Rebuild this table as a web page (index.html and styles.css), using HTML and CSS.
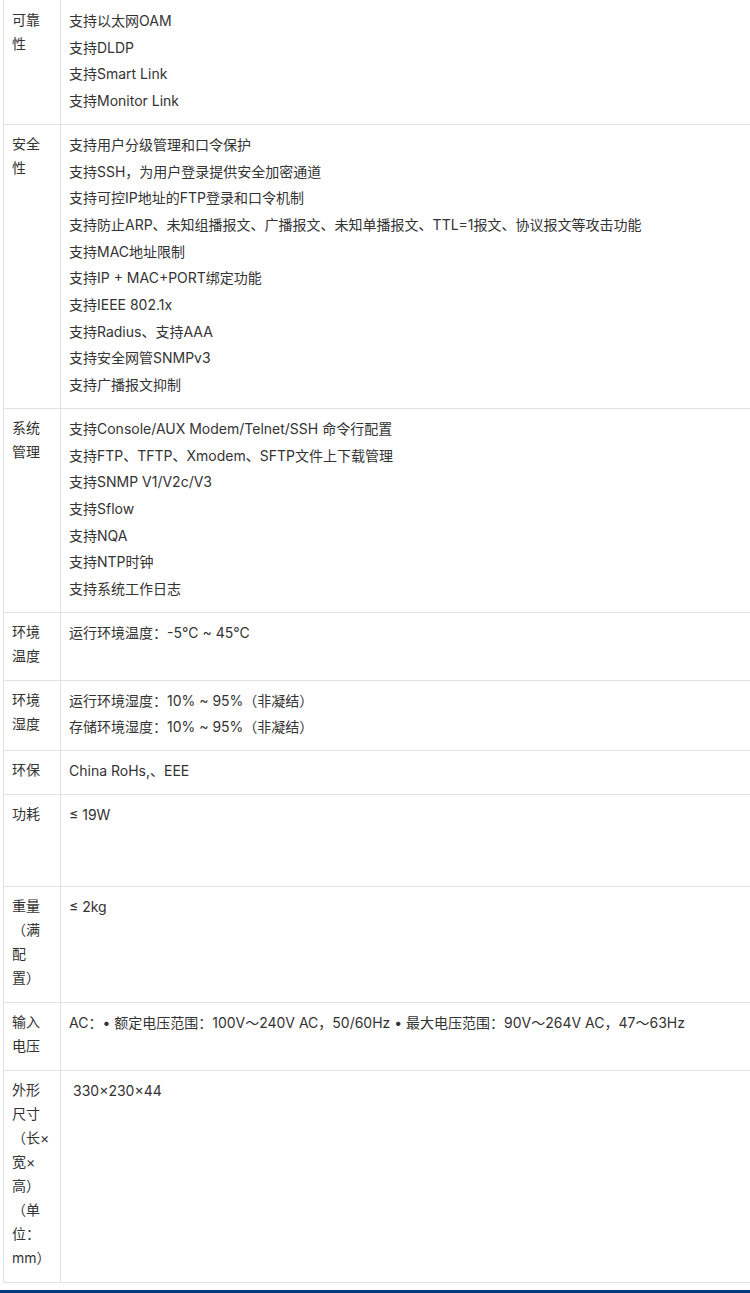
FILE: index.html
```html
<!DOCTYPE html>
<html lang="zh-CN">
<head>
  <meta charset="UTF-8">
  <meta name="viewport" content="width=device-width, initial-scale=1.0">
  <title>产品规格</title>
  <link rel="stylesheet" href="styles.css">
</head>
<body>
  <table class="spec">
    <tr>
      <td class="label">可靠性</td>
      <td class="value">支持以太网OAM<br>支持DLDP<br>支持Smart Link<br>支持Monitor Link</td>
    </tr>
    <tr>
      <td class="label">安全性</td>
      <td class="value">支持用户分级管理和口令保护<br>支持SSH，为用户登录提供安全加密通道<br>支持可控IP地址的FTP登录和口令机制<br>支持防止ARP、未知组播报文、广播报文、未知单播报文、TTL=1报文、协议报文等攻击功能<br>支持MAC地址限制<br>支持IP + MAC+PORT绑定功能<br>支持IEEE 802.1x<br>支持Radius、支持AAA<br>支持安全网管SNMPv3<br>支持广播报文抑制</td>
    </tr>
    <tr>
      <td class="label">系统管理</td>
      <td class="value">支持Console/AUX Modem/Telnet/SSH 命令行配置<br>支持FTP、TFTP、Xmodem、SFTP文件上下载管理<br>支持SNMP V1/V2c/V3<br>支持Sflow<br>支持NQA<br>支持NTP时钟<br>支持系统工作日志</td>
    </tr>
    <tr>
      <td class="label">环境温度</td>
      <td class="value">运行环境温度：-5°C ~ 45°C</td>
    </tr>
    <tr>
      <td class="label">环境湿度</td>
      <td class="value">运行环境湿度：10% ~ 95%（非凝结）<br>存储环境湿度：10% ~ 95%（非凝结）</td>
    </tr>
    <tr>
      <td class="label">环保</td>
      <td class="value">China RoHs,、EEE</td>
    </tr>
    <tr>
      <td class="label">功耗</td>
      <td class="value"><div class="tall">≤ 19W</div></td>
    </tr>
    <tr>
      <td class="label">重量（满配置）</td>
      <td class="value">≤ 2kg</td>
    </tr>
    <tr>
      <td class="label">输入电压</td>
      <td class="value">AC：• 额定电压范围：100V～240V AC，50/60Hz • 最大电压范围：90V～264V AC，47～63Hz</td>
    </tr>
    <tr>
      <td class="label">外形尺寸（长×宽×高）（单位：mm）</td>
      <td class="value"><span class="indent">330×230×44</span></td>
    </tr>
  </table>

  <footer class="bar"></footer>
</body>
</html>
```

FILE: styles.css
```css
html {
  overflow: hidden;
}
body {
  margin: 0;
  font-family: Inter, "Noto Sans CJK SC", sans-serif;
  font-size: 14px;
  color: #333;
  background: #fff;
  text-spacing-trim: space-all;
}
.spec {
  border-collapse: collapse;
  width: 820px;
  margin: -1px 0 0 3px;
}
.spec td {
  border: 1px solid #e2e2e2;
  vertical-align: top;
  padding: 7px 8px 9px;
}
.spec tr:first-child td {
  padding-top: 8px;
}
.spec .label {
  width: 40px;
  line-height: 24px;
  padding-bottom: 12px;
}
.spec .value {
  line-height: 26.7px;
  white-space: nowrap;
}
.tall {
  min-height: 75px;
}
.indent {
  padding-left: 4px;
}
.bar {
  margin-top: 7px;
  height: 40px;
  background: #023b7e;
}
```
